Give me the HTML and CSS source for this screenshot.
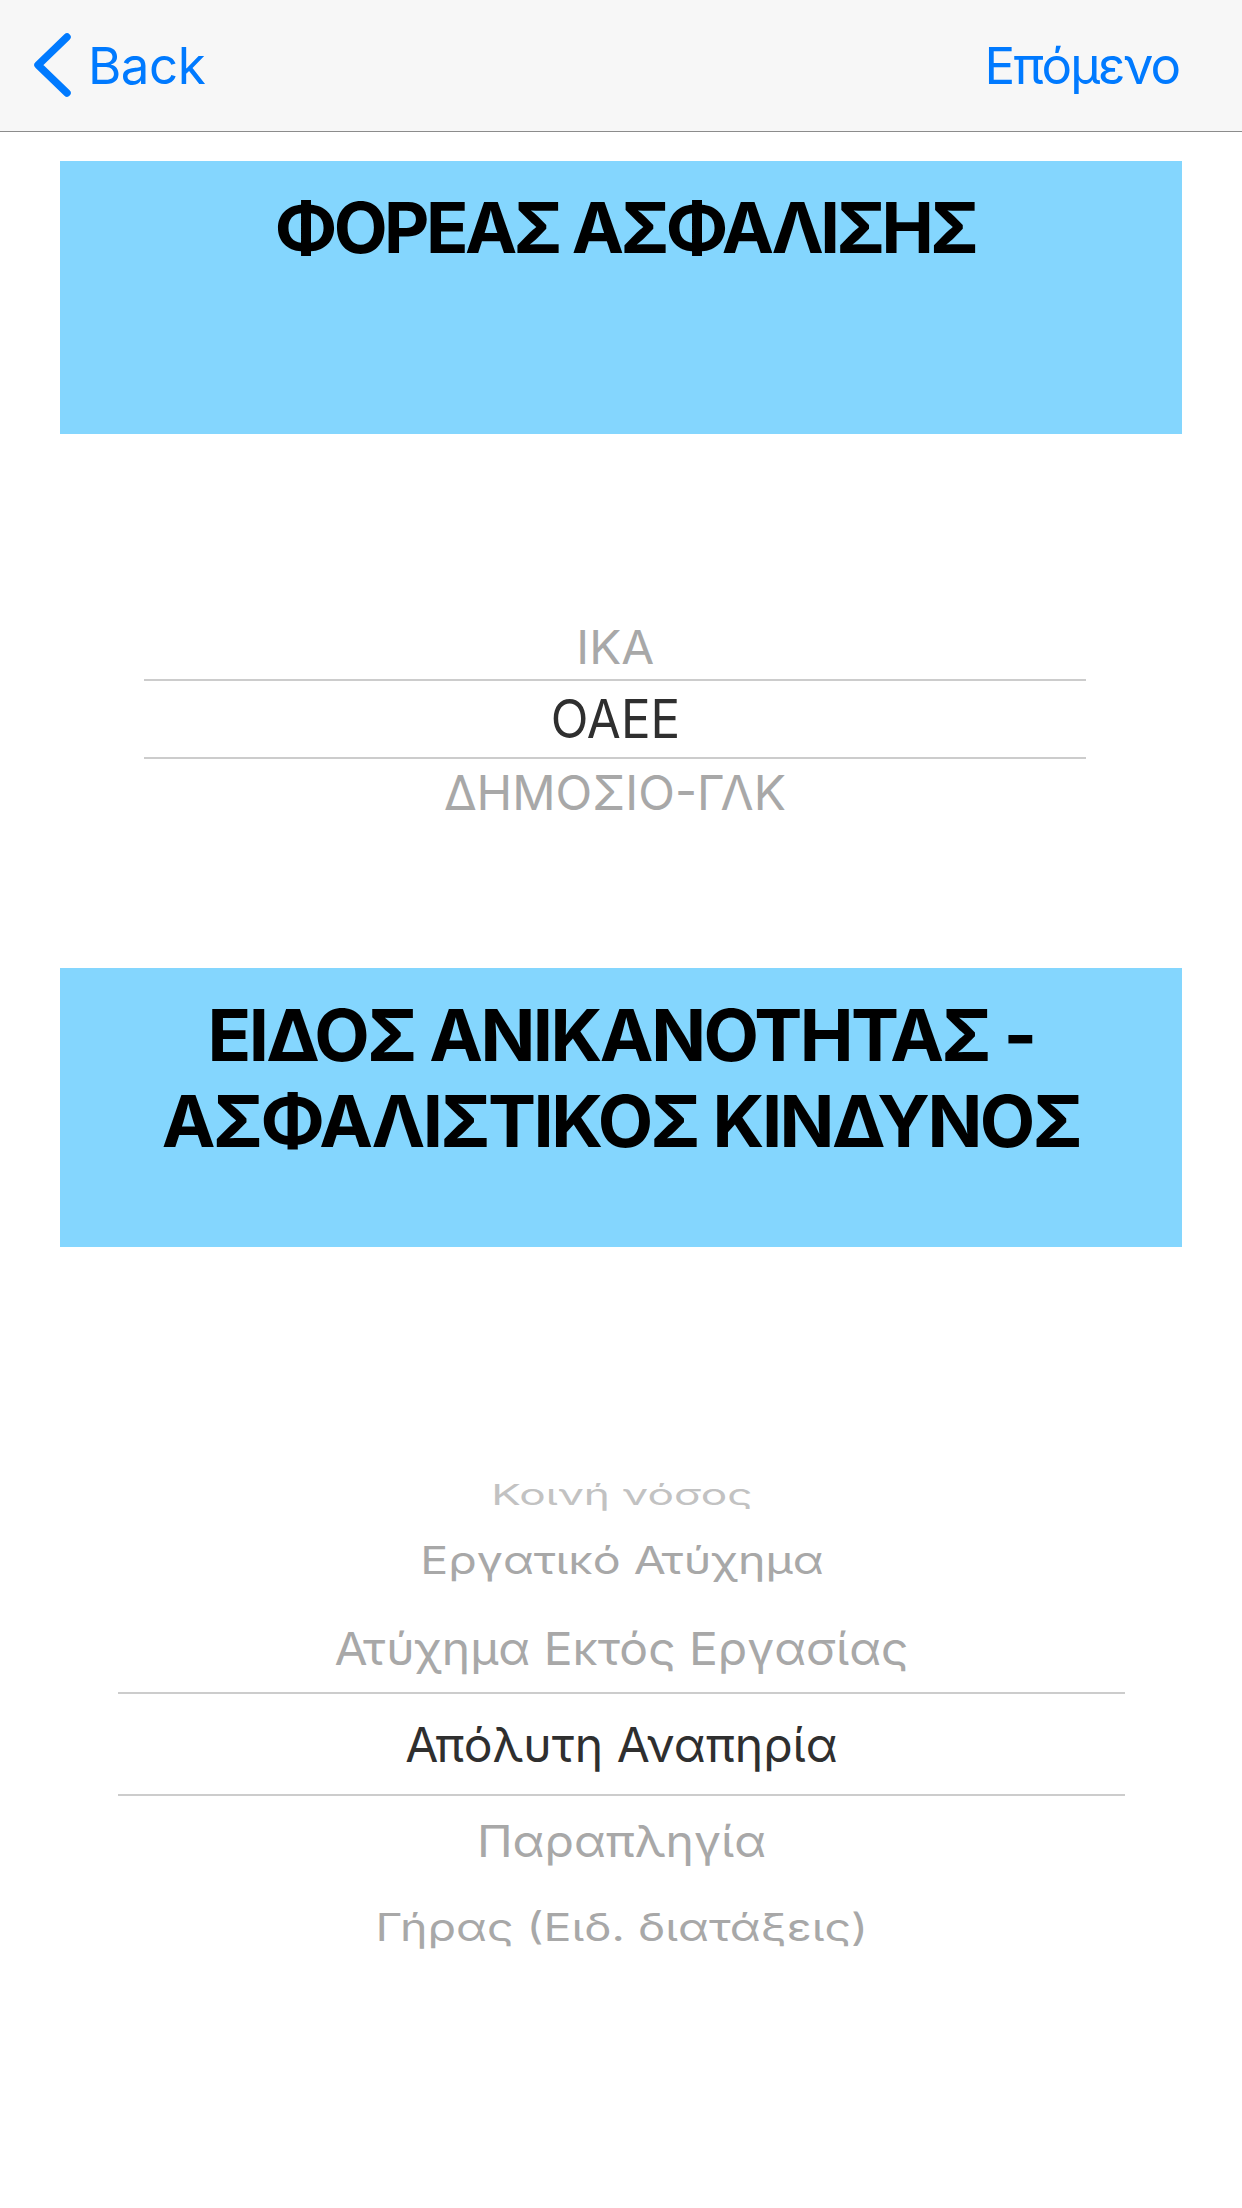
FILE: index.html
```html
<!DOCTYPE html>
<html lang="el">
<head>
<meta charset="utf-8">
<title>Φορέας ασφάλισης</title>
<link rel="stylesheet" href="styles.css">
</head>
<body>
<header class="navbar">
  <a class="nav-back" href="#">
    <svg class="chevron" width="40" height="66" viewBox="0 0 40 66" aria-hidden="true">
      <polyline points="33,4 4,32 33,60" fill="none" stroke="#007aff" stroke-width="7.5" stroke-linecap="round" stroke-linejoin="round"/>
    </svg>
    <span class="nav-label">Back</span>
  </a>
  <a class="nav-next" href="#">Επόμενο</a>
</header>

<main class="content">
  <section class="banner banner-first">
    <h1 class="banner-title title-one">ΦΟΡΕΑΣ ΑΣΦΑΛΙΣΗΣ</h1>
  </section>

  <div class="picker picker-one">
    <div class="row p1-above"><span class="label dim p1-tilt-a">ΙΚΑ</span></div>
    <div class="row p1-selected"><span class="label sel p1-flat">ΟΑΕΕ</span></div>
    <div class="row p1-below"><span class="label dim p1-tilt-b">ΔΗΜΟΣΙΟ-ΓΛΚ</span></div>
  </div>

  <section class="banner banner-second">
    <h1 class="banner-title title-two">ΕΙΔΟΣ ΑΝΙΚΑΝΟΤΗΤΑΣ -<br>ΑΣΦΑΛΙΣΤΙΚΟΣ ΚΙΝΔΥΝΟΣ</h1>
  </section>

  <div class="picker picker-two">
    <div class="row p2-r1"><span class="label faint t1">Κοινή νόσος</span></div>
    <div class="row p2-r2"><span class="label dim t2">Εργατικό Ατύχημα</span></div>
    <div class="row p2-r3"><span class="label dim t3">Ατύχημα Εκτός Εργασίας</span></div>
    <div class="row p2-selected"><span class="label sel">Απόλυτη Αναπηρία</span></div>
    <div class="row p2-r5"><span class="label dim t5">Παραπληγία</span></div>
    <div class="row p2-r6"><span class="label dim t6">Γήρας (Ειδ. διατάξεις)</span></div>
  </div>
</main>
</body>
</html>
```

FILE: styles.css
```css
html, body {
  margin: 0;
  padding: 0;
  background: #ffffff;
}

body {
  width: 1242px;
  min-height: 2208px;
  font-family: Inter, "Noto Sans", "DejaVu Sans", sans-serif;
}

/* Navigation bar */
.navbar {
  height: 131px;
  display: flex;
  align-items: center;
  justify-content: space-between;
  padding: 0 63px 0 34px;
  background: #f7f7f7;
  border-bottom: 1px solid #8c8c8c;
}

.nav-back,
.nav-next {
  display: flex;
  align-items: center;
  color: #007aff;
  text-decoration: none;
  font-size: 51px;
  font-weight: 400;
  letter-spacing: -0.5px;
}

.nav-next {
  letter-spacing: -2px;
}

.chevron {
  display: block;
  margin-right: 14px;
}

/* Content */
.content {
  padding: 29px 60px 0;
  display: flex;
  flex-direction: column;
}

.banner {
  background: #84d6fe;
  box-sizing: border-box;
  padding-top: 24px;
}

.banner-first {
  height: 273px;
}

.banner-second {
  height: 279px;
}

.banner-title {
  margin: 0;
  text-align: center;
  font-size: 72px;
  line-height: 86px;
  font-weight: 700;
  color: #000000;
}

.title-one {
  font-size: 70px;
  letter-spacing: -3.5px;
  padding-left: 8px;
}

.title-two {
  letter-spacing: -2.5px;
}

/* Pickers */
.picker {
  display: flex;
  flex-direction: column;
}

.row {
  display: flex;
  align-items: center;
  justify-content: center;
  box-sizing: border-box;
}

.label {
  display: block;
  white-space: nowrap;
  font-weight: 400;
}

.sel { color: #2f2f2f; }
.dim { color: #a8a8a8; }
.faint { color: #c2c2c2; }

/* picker one */
.picker-one {
  width: 942px;
  margin: 181px 0 141px 84px;
  font-size: 53px;
}

.p1-above { height: 64px; }
.p1-selected {
  height: 80px;
  border-top: 2px solid #cccccc;
  border-bottom: 2px solid #cccccc;
}
.p1-below { height: 68px; }

.p1-flat { transform: scaleX(0.93); }
.p1-tilt-a { transform: scale(0.9, 0.87); }
.p1-tilt-b { transform: scale(0.905, 0.9); }

/* picker two */
.picker-two {
  width: 1007px;
  margin: 224px 0 0 58px;
  font-size: 48px;
}

.p2-r1 { height: 46px; }
.p2-r2 { height: 87px; }
.p2-r3 { height: 88px; }
.p2-selected {
  height: 104px;
  border-top: 2px solid #cccccc;
  border-bottom: 2px solid #cccccc;
}
.p2-r5 { height: 91px; }
.p2-r6 { height: 81px; }

.t1 { transform: scale(0.92, 0.59); }
.t2 { transform: scale(0.97, 0.79); }
.t3 { transform: scaleY(0.94); }
.t5 { transform: scaleY(0.91); }
.t6 { transform: scale(0.97, 0.79); }
```
